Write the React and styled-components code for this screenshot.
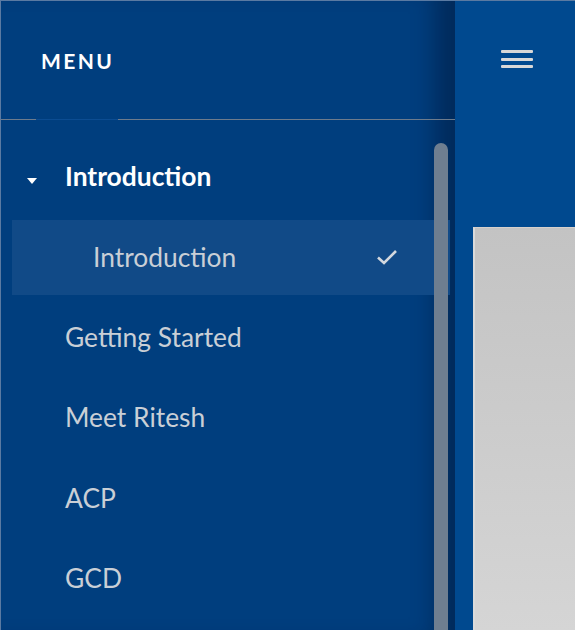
import React from "react";
import styled, { createGlobalStyle } from "styled-components";

const GlobalStyle = createGlobalStyle`
	html, body {
		margin: 0;
		padding: 0;
		overflow: hidden;
	}
	body {
		font-family: Lato, "Open Sans", sans-serif;
	}
`;

const Frame = styled.div`
	display: flex;
	width: 575px;
	height: 630px;
	box-sizing: border-box;
	border-top: 1px solid #5a7aa2;
	border-left: 1px solid #5a7aa2;
	background: #00498f;
	overflow: hidden;
`;

const Sidebar = styled.nav`
	position: relative;
	display: flex;
	flex-direction: column;
	width: 454px;
	flex-shrink: 0;
	background: #003e7e;
	box-shadow: inset -34px 0 22px -14px rgba(0, 20, 50, 0.45);
`;

const SidebarHeader = styled.div`
	display: flex;
	align-items: center;
	height: 118px;
	padding-left: 40px;
	color: #ffffff;
	font-size: 21px;
	font-weight: 700;
	letter-spacing: 2.4px;
`;

const Divider = styled.div`
	height: 1px;
	background: linear-gradient(
		to right,
		#6d7b8c 0,
		#6d7b8c 35px,
		#0b4c92 35px,
		#0b4c92 117px,
		#6d7b8c 117px
	);
`;

const List = styled.ul`
	list-style: none;
	margin: 0;
	padding: 16px 0 0 0;
`;

const Item = styled.li`
	display: flex;
	align-items: center;
	height: ${p => (p.active ? "75px" : "80.5px")};
	margin: ${p => (p.active ? "3px 5px 2px 11px" : "0")};
	padding-left: ${p => (p.active ? "81px" : "64px")};
	padding-right: 52px;
	background: ${p => (p.active ? "#114a87" : "transparent")};
	color: ${p => (p.bold ? "#ffffff" : "#c9cfd6")};
	font-size: 26.4px;
	font-weight: ${p => (p.bold ? 700 : 400)};
	position: relative;
`;

const Caret = styled.span`
	position: absolute;
	left: 26px;
	top: 42px;
	width: 0;
	height: 0;
	border-left: 5.5px solid transparent;
	border-right: 5.5px solid transparent;
	border-top: 6px solid #ffffff;
`;

const Label = styled.span`
	flex: 1;
`;

const Check = styled.svg`
	width: 22px;
	height: 18px;
`;

const Scrollbar = styled.div`
	position: absolute;
	right: 7px;
	top: 142px;
	bottom: 0;
	width: 14px;
	border-radius: 7px 7px 0 0;
	background: #6e7e90;
`;

const Main = styled.div`
	display: flex;
	flex-direction: column;
	flex: 1;
`;

const TopBar = styled.div`
	display: flex;
	align-items: flex-start;
	height: 118px;
	padding: 49px 0 0 46px;
	box-sizing: border-box;
`;

const MenuButton = styled.div`
	display: flex;
	flex-direction: column;
	gap: 4.5px;
	width: 32px;
	span {
		display: block;
		height: 3px;
		border-radius: 1px;
		background: #d8d8d8;
	}
`;

const Content = styled.div`
	flex: 1;
	margin: 108px 0 0 18px;
	border-top: 1px solid #d6d0cc;
	border-left: 2px solid #dadada;
	background: linear-gradient(to bottom, #c3c3c3, #d5d5d5);
`;

const items = ["Getting Started", "Meet Ritesh", "ACP", "GCD"];

const App = () => {
	return (
		<>
			<GlobalStyle />
			<Frame>
				<Sidebar>
					<SidebarHeader>MENU</SidebarHeader>
					<Divider />
					<List>
						<Item bold>
							<Caret />
							<Label>Introduction</Label>
						</Item>
						<Item active>
							<Label>Introduction</Label>
							<Check viewBox="0 0 22 18">
								<path
									d="M2 9.5 L8 15 L20 3"
									fill="none"
									stroke="#d3d8de"
									strokeWidth="2.6"
								/>
							</Check>
						</Item>
						{items.map(name => (
							<Item key={name}>
								<Label>{name}</Label>
							</Item>
						))}
					</List>
					<Scrollbar />
				</Sidebar>
				<Main>
					<TopBar>
						<MenuButton>
							<span />
							<span />
							<span />
						</MenuButton>
					</TopBar>
					<Content />
				</Main>
			</Frame>
		</>
	);
};

export default App;
